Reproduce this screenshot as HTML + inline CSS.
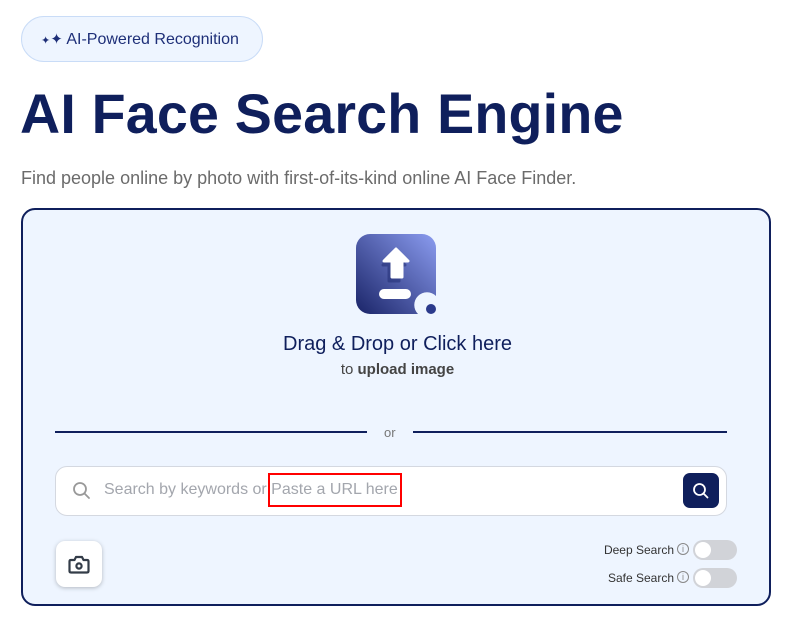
<!DOCTYPE html>
<html><head><style>
*{box-sizing:border-box;margin:0;padding:0}
body{width:795px;height:619px;background:#fff;font-family:"Liberation Sans",sans-serif;position:relative;overflow:hidden}
.a{position:absolute}
</style></head><body>
<div class="a" style="left:21px;top:16px;width:242px;height:46px;border:1px solid #c9dcf7;background:#eef5ff;border-radius:23px;"></div>
<div class="a" style="left:41px;top:30px;font-size:16px;color:#1e2f78;white-space:nowrap"><span style="font-size:11px">✦</span><span style="font-size:15px">✦</span> AI-Powered Recognition</div>
<div class="a" style="left:20px;top:82px;font-size:55.6px;font-weight:bold;color:#0f1f5c;white-space:nowrap;letter-spacing:0.2px">AI Face Search Engine</div>
<div class="a" style="left:21px;top:168px;font-size:18px;color:#6b6b6b;white-space:nowrap">Find people online by photo with first-of-its-kind online AI Face Finder.</div>
<div class="a" style="left:21px;top:208px;width:750px;height:398px;border:2px solid #0f1f5c;border-radius:14px;background:#eef5ff"></div>
<svg class="a" style="left:356px;top:234px" width="82" height="82" viewBox="0 0 82 82">
<defs><linearGradient id="g" x1="1" y1="0" x2="0" y2="1"><stop offset="0" stop-color="#8b9cf0"/><stop offset="1" stop-color="#1a2468"/></linearGradient></defs>
<path d="M14 0H66A14 14 0 0 1 80 14V62A10 10 0 0 0 62 80H14A14 14 0 0 1 0 66V14A14 14 0 0 1 14 0Z" fill="url(#g)"/>
<circle cx="75" cy="75" r="5" fill="#2b3a8c"/>
<path d="M37 19L49 31H43V47H33V31H27Z" fill="#1e2a70" opacity=".5" stroke="#1e2a70" stroke-width="3" stroke-linejoin="round"/>
<path d="M40 15L52 27H46V43H36V27H28Z" fill="#fff" stroke="#fff" stroke-width="3" stroke-linejoin="round"/>
<rect x="23" y="55" width="32" height="10" rx="5" fill="#fff"/>
</svg>
<div class="a" style="left:0;width:795px;top:333px;text-align:center;font-size:20px;color:#0f1f5c">Drag &amp; Drop or Click here</div>
<div class="a" style="left:0;width:795px;top:361px;text-align:center;font-size:15px;color:#444">to <b>upload image</b></div>
<div class="a" style="left:55px;top:431px;width:312px;height:2px;background:#0f1f5c"></div>
<div class="a" style="left:413px;top:431px;width:314px;height:2px;background:#0f1f5c"></div>
<div class="a" style="left:384px;top:425px;font-size:13px;color:#777">or</div>
<div class="a" style="left:55px;top:466px;width:672px;height:50px;background:#fff;border:1px solid #d4d8e0;border-radius:12px"></div>
<svg class="a" style="left:72px;top:481px" width="20" height="20" viewBox="0 0 20 20"><circle cx="8" cy="8" r="6" fill="none" stroke="#999" stroke-width="1.8"/><path d="M12.5 12.5L17 17" stroke="#999" stroke-width="1.8" stroke-linecap="round"/></svg>
<div class="a" style="left:104px;top:481px;font-size:16px;color:#a3a6ad;white-space:nowrap">Search by keywords or Paste a URL here</div>
<div class="a" style="left:268px;top:473px;width:134px;height:34px;border:2px solid #f00"></div>
<div class="a" style="left:683px;top:473px;width:36px;height:35px;background:#0f1f5c;border-radius:7px"></div>
<svg class="a" style="left:691px;top:481px" width="20" height="20" viewBox="0 0 20 20"><circle cx="8.5" cy="8.5" r="5.5" fill="none" stroke="#fff" stroke-width="1.8"/><path d="M12.5 12.5L16.5 16.5" stroke="#fff" stroke-width="1.8" stroke-linecap="round"/></svg>
<div class="a" style="left:56px;top:541px;width:46px;height:46px;background:#fff;border-radius:9px;box-shadow:0 1px 4px rgba(0,0,0,.25)"></div>
<svg class="a" style="left:68px;top:555px" width="22" height="20" viewBox="0 0 22 20"><path d="M1.5 6.5Q1.5 5 3 5H6.5L8 2H14L15.5 5H19Q20.5 5 20.5 6.5V16Q20.5 17.5 19 17.5H3Q1.5 17.5 1.5 16Z" fill="none" stroke="#333c48" stroke-width="2.2" stroke-linejoin="round"/><circle cx="11" cy="11" r="2.6" fill="none" stroke="#333c48" stroke-width="2.2"/></svg>
<div class="a" style="left:560px;top:543px;width:114px;text-align:right;font-size:12px;color:#333">Deep Search</div>
<div class="a" style="left:560px;top:571px;width:114px;text-align:right;font-size:12px;color:#333">Safe Search</div>
<div class="a" style="left:677px;top:543px;width:12px;height:12px;border:1px solid #888;border-radius:50%;font-size:9px;text-align:center;line-height:10px;color:#888">i</div>
<div class="a" style="left:677px;top:571px;width:12px;height:12px;border:1px solid #888;border-radius:50%;font-size:9px;text-align:center;line-height:10px;color:#888">i</div>
<div class="a" style="left:693px;top:540px;width:44px;height:20px;background:#d1d3d8;border-radius:10px"></div>
<div class="a" style="left:695px;top:542px;width:16px;height:16px;background:#fff;border-radius:50%"></div>
<div class="a" style="left:693px;top:568px;width:44px;height:20px;background:#d1d3d8;border-radius:10px"></div>
<div class="a" style="left:695px;top:570px;width:16px;height:16px;background:#fff;border-radius:50%"></div>
</body></html>
